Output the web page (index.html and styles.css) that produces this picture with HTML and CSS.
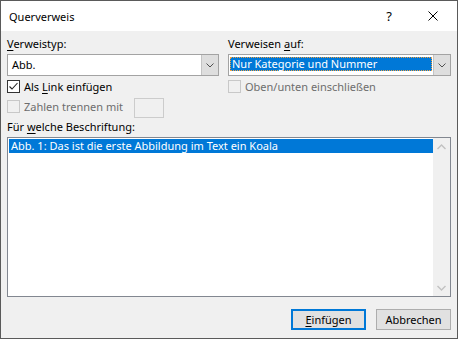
FILE: index.html
```html
<!DOCTYPE html>
<html lang="de">
<head>
    <meta charset="UTF-8">
    <title>Querverweis</title>
    <link rel="stylesheet" href="styles.css">
</head>
<body>
    <div class="dialog">
        <div class="titlebar">
            <span class="title">Querverweis</span>
            <span class="caption-btn help">?</span>
            <span class="caption-btn close">
                <svg width="10" height="10" viewBox="0 0 10 10">
                    <path d="M0.5 0.5 L9.5 9.5 M9.5 0.5 L0.5 9.5" stroke="#000" stroke-width="1" fill="none"/>
                </svg>
            </span>
        </div>
        <div class="content">
            <div class="columns">
                <div class="col">
                    <div class="label"><u>V</u>erweistyp:</div>
                    <div class="combo">
                        <span class="combo-text">Abb.</span>
                        <span class="combo-btn">
                            <svg width="8" height="5" viewBox="0 0 8 5"><path d="M0.5 0.5 L4 4 L7.5 0.5" stroke="#505050" fill="none"/></svg>
                        </span>
                    </div>
                    <div class="check-row">
                        <span class="checkbox checked">
                            <svg width="11" height="11" viewBox="0 0 11 11"><path d="M1.5 5.5 L4 8 L9.5 2" stroke="#222" stroke-width="1.1" fill="none"/></svg>
                        </span>
                        <span>Als <u>L</u>ink einfügen</span>
                    </div>
                    <div class="check-row disabled tall">
                        <span class="checkbox"></span>
                        <span class="fixed-text">Zahlen trennen mit</span>
                        <span class="small-input"></span>
                    </div>
                </div>
                <div class="col">
                    <div class="label">Verweisen <u>a</u>uf:</div>
                    <div class="combo focused">
                        <span class="combo-text"><span class="selected-text">Nur Kategorie und Nummer</span></span>
                        <span class="combo-btn">
                            <svg width="8" height="5" viewBox="0 0 8 5"><path d="M0.5 0.5 L4 4 L7.5 0.5" stroke="#505050" fill="none"/></svg>
                        </span>
                    </div>
                    <div class="check-row disabled">
                        <span class="checkbox"></span>
                        <span>Oben/unten einschließen</span>
                    </div>
                </div>
            </div>
            <div class="label list-label">Für <u>w</u>elche Beschriftung:</div>
            <div class="listbox">
                <div class="list-items">
                    <div class="item selected">Abb. 1: Das ist die erste Abbildung im Text ein Koala</div>
                </div>
                <div class="scrollbar">
                    <span class="arrow">
                        <svg width="9" height="6" viewBox="0 0 9 6"><path d="M0.5 5 L4.5 1 L8.5 5" stroke="#c2c2c2" stroke-width="1.4" fill="none"/></svg>
                    </span>
                    <span class="arrow">
                        <svg width="9" height="6" viewBox="0 0 9 6"><path d="M0.5 1 L4.5 5 L8.5 1" stroke="#c2c2c2" stroke-width="1.4" fill="none"/></svg>
                    </span>
                </div>
            </div>
            <div class="buttons">
                <button class="btn default"><u>E</u>infügen</button>
                <button class="btn">Abbrechen</button>
            </div>
        </div>
    </div>
</body>
</html>
```

FILE: styles.css
```css
* {
    box-sizing: border-box;
}

body {
    margin: 0;
    font-family: "Noto Sans", "Open Sans", sans-serif;
    font-size: 11px;
    color: #000;
}

u {
    text-underline-offset: 2px;
}

/* Fensterrahmen */
.dialog {
    width: 458px;
    height: 339px;
    border: 1px solid #5a5a5a;
    display: flex;
    flex-direction: column;
    background: #f0f0f0;
}

.titlebar {
    height: 30px;
    background: #fff;
    display: flex;
    align-items: center;
}
.title {
    flex: 1;
    padding-left: 8px;
    line-height: 15px;
}
.caption-btn {
    width: 46px;
    height: 30px;
    display: flex;
    align-items: center;
    justify-content: center;
}
.help {
    font-size: 13px;
    padding-left: 2px;
}
.close {
    padding-right: 2px;
}

/* Inhalt */
.content {
    flex: 1;
    padding: 5px 6px 0;
}

.columns {
    display: grid;
    grid-template-columns: 212px 223px;
    column-gap: 9px;
}

.label {
    line-height: 15px;
    margin-bottom: 3px;
}
.list-label {
    margin-top: 1px;
}

.combo {
    height: 22px;
    border: 1px solid #a3a3a3;
    background: #fff;
    display: flex;
}
.combo-text {
    flex: 1;
    padding: 2px 1px 0 4px;
    line-height: 15px;
}
.combo-btn {
    width: 17px;
    background: #dedede;
    border-left: 1px solid #c4c4c4;
    display: flex;
    align-items: center;
    justify-content: center;
}
.combo.focused .combo-text {
    padding: 2px 1px 2px 1px;
}
.selected-text {
    display: block;
    height: 14px;
    background: #0078d7;
    color: #fff;
    border: 1px dotted #f0a040;
    line-height: 12px;
    padding-left: 1px;
}

/* Kontrollkästchen */
.check-row {
    display: flex;
    align-items: center;
    gap: 4px;
    height: 15px;
    margin-top: 3px;
    line-height: 15px;
    white-space: nowrap;
}
.check-row.tall {
    height: 20px;
    margin-top: 4px;
    align-items: flex-start;
}
.check-row.tall .checkbox {
    margin-top: 2px;
}
.check-row.tall .fixed-text {
    margin-top: 1px;
}
.checkbox {
    flex: none;
    width: 13px;
    height: 13px;
    border: 1px solid #333;
    background: #fff;
    display: flex;
    align-items: center;
    justify-content: center;
}
.disabled {
    color: #6d6d6d;
}
.disabled .checkbox {
    border-color: #c8c8c8;
    background: #f0f0f0;
}
.fixed-text {
    width: 106px;
}
.small-input {
    width: 30px;
    height: 20px;
    border: 1px solid #cccccc;
    background: #f0f0f0;
}

/* Liste */
.listbox {
    height: 160px;
    border: 1px solid #828790;
    background: #fff;
    display: flex;
}
.list-items {
    flex: 1;
    padding: 1px 0 0 1px;
}
.item {
    height: 14px;
    line-height: 13px;
    padding-left: 2px;
}
.item.selected {
    background: #0078d7;
    color: #fff;
}
.scrollbar {
    width: 17px;
    background: #f0f0f0;
    display: flex;
    flex-direction: column;
    justify-content: space-between;
}
.arrow {
    height: 17px;
    display: flex;
    align-items: center;
    justify-content: center;
}

/* Schaltflächen */
.buttons {
    display: flex;
    justify-content: flex-end;
    gap: 10px;
    margin-top: 12px;
}
.btn {
    width: 75px;
    height: 21px;
    border: 1px solid #adadad;
    background: #e1e1e1;
    font: inherit;
    color: #000;
    padding: 0;
    line-height: 15px;
}
.btn.default {
    border: 2px solid #0078d7;
}
```
